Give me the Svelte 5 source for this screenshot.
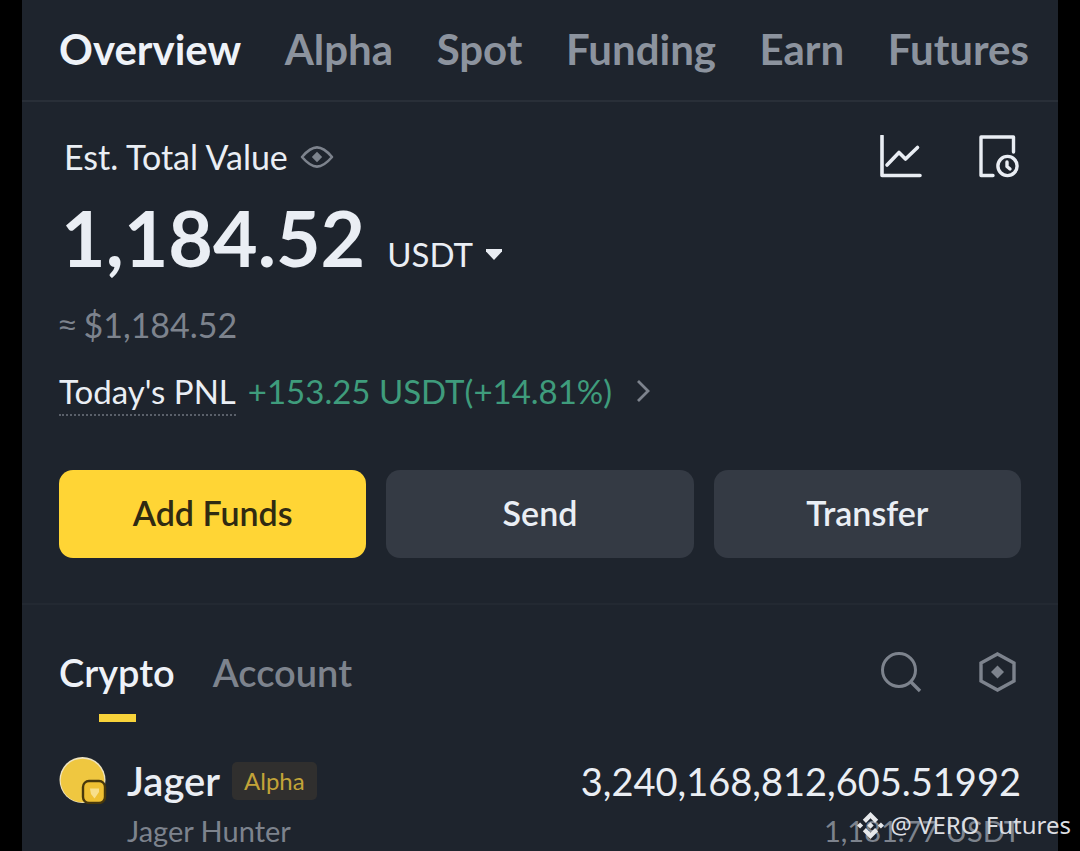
<script>
  const sections = ['Overview', 'Alpha', 'Spot', 'Funding', 'Earn', 'Futures'];
</script>

<div class="screen">
  <main class="wallet">
    <nav class="sections" aria-label="Wallet sections">
      {#each sections as name, i}
        <a href="#{name.toLowerCase()}" class:active={i === 0}>{name}</a>
      {/each}
    </nav>

    <section class="summary">
      <header class="summary-head">
        <h1>Est. Total Value</h1>
        <button class="icon" aria-label="Hide balance">
          <svg width="34" height="24" viewBox="0 0 34 24" fill="none" stroke="#7d838d" stroke-width="2.6" stroke-linejoin="round">
            <path d="M2 12C8 5 12 2.400 17 2.400S26 5 32 12C26 19 22 21.600 17 21.600S8 19 2 12Z" />
            <path d="M17 6.800L22.200 12L17 17.200L11.800 12Z" fill="#7d838d" stroke="none" />
          </svg>
        </button>
        <div class="tools">
          <button class="icon" aria-label="Asset analysis">
            <svg width="44" height="44" viewBox="0 0 44 44" fill="none" stroke="#e9edf3" stroke-width="3.6" stroke-linejoin="round" stroke-linecap="round">
              <path d="M3 1V40.500H41" />
              <path d="M8 30L20 17.500L26.500 24L38.500 12.500" />
            </svg>
          </button>
          <button class="icon" aria-label="Transaction history">
            <svg width="44" height="44" viewBox="0 0 44 44" fill="none" stroke="#e9edf3" stroke-width="3.4" stroke-linejoin="round" stroke-linecap="round">
              <path d="M16 40.500H4V2H36.500V17" />
              <circle cx="30.500" cy="31" r="9.600" />
              <path d="M30 27V31.500L33 34" stroke-width="3.400" />
            </svg>
          </button>
        </div>
      </header>

      <div class="total">
        <strong>1,184.52</strong>
        <button class="unit">
          USDT
          <svg width="18" height="14" viewBox="0 0 18 14" fill="#e9edf3"><path d="M1 2H17V4.500L9 13L1 4.500Z" /></svg>
        </button>
      </div>
      <p class="fiat"><span>≈</span>$1,184.52</p>
      <div class="pnl">
        <span class="pnl-label">Today's PNL</span>
        <a href="#pnl" class="pnl-value">
          +153.25 USDT(+14.81%)
          <svg width="14" height="24" viewBox="0 0 14 24" fill="none" stroke="#7d838d" stroke-width="2.800"><path d="M2 2L12 12L2 22" /></svg>
        </a>
      </div>

      <div class="actions">
        <button class="primary">Add Funds</button>
        <button>Send</button>
        <button>Transfer</button>
      </div>
    </section>

    <section class="assets">
      <header class="asset-head">
        <button class="tab active">Crypto</button>
        <button class="tab">Account</button>
        <div class="tools">
          <button class="icon" aria-label="Search">
            <svg width="44" height="44" viewBox="0 0 44 44" fill="none" stroke="#7d838d" stroke-width="3"><circle cx="20" cy="20" r="16.500" /><path d="M31 31L41 41" stroke-width="3.400" /></svg>
          </button>
          <button class="icon" aria-label="Settings">
            <svg width="44" height="44" viewBox="0 0 44 44" fill="none" stroke="#7d838d" stroke-width="3.400"><path d="M20.500 4L37 13V31L20.500 40L4 31V13Z" /><path d="M20.500 15.500L27 22L20.500 28.500L14 22Z" fill="#7d838d" stroke="none" /></svg>
          </button>
        </div>
      </header>

      <article class="asset">
        <svg class="coin" width="48" height="48" viewBox="0 0 48 48">
          <circle cx="23.500" cy="24" r="23" fill="#eee3c0" />
          <circle cx="23.500" cy="24.500" r="21.800" fill="#efc740" />
          <rect x="24" y="25" width="22" height="22" rx="6" fill="#efc033" stroke="#48380c" stroke-width="2.400" />
          <path d="M31 32.500H40V36L35.500 42.500L32 38Z" fill="#f8df8c" />
        </svg>
        <div class="name">
          <h2>Jager <span class="badge">Alpha</span></h2>
          <p>Jager Hunter</p>
        </div>
        <div class="amount">
          <strong>3,240,168,812,605.51992</strong>
          <p>1,181.77 USDT</p>
        </div>
      </article>
    </section>
  </main>

  <div class="credit">
    <svg width="27" height="27" viewBox="0 0 28 28" fill="#e6e8eb">
      <path d="M14 0L22 8L18.700 11.300L14 6.600L9.300 11.300L6 8Z" />
      <path d="M14 28L22 20L18.700 16.700L14 21.400L9.300 16.700L6 20Z" />
      <path d="M3.200 10.800L6.400 14L3.200 17.200L0 14ZM24.800 10.800L28 14L24.800 17.200L21.600 14ZM14 10.700L17.300 14L14 17.300L10.700 14Z" />
    </svg>
    <span>@ VERO Futures</span>
  </div>
</div>

<style>
  :global(body) { margin: 0; background: #000; }
  .screen {
    position: relative;
    box-sizing: border-box;
    height: 100vh;
    overflow: hidden;
    padding: 0 22px;
    font-family: Lato, "Liberation Sans", sans-serif;
    color: #eaeef4;
    background: #000;
  }
  .wallet { min-height: 100%; background: #1e242d; }
  h1, h2, p { margin: 0; font-weight: 400; }
  button { font: inherit; color: inherit; background: none; border: 0; padding: 0; cursor: pointer; }
  a { color: inherit; text-decoration: none; }
  svg { display: block; flex: none; }
  .sections {
    display: flex;
    justify-content: space-between;
    padding: 24px 29px 25px 37px;
    border-bottom: 2px solid #292f38;
    font-size: 42px;
    line-height: 51px;
    font-weight: 700;
    color: #8c939e;
  }
  .sections .active { color: #eef2f8; }
  .summary { padding: 32px 37px 45px; border-bottom: 2px solid #232932; }
  .summary-head { display: flex; align-items: center; height: 46px; padding-left: 5px; }
  h1 { font-size: 34px; line-height: 46px; margin-right: 12px; }
  .tools { display: flex; gap: 54px; margin-left: auto; }
  .total { display: flex; align-items: baseline; gap: 22px; padding-left: 2px; }
  .total strong { font-size: 77px; line-height: 114px; font-weight: 700; }
  .unit { display: flex; align-items: center; gap: 12px; font-size: 33px; }
  .fiat { display: flex; gap: 8px; margin-top: 8px; font-size: 34px; line-height: 46px; color: #7d838d; }
  .fiat span { font-family: "Liberation Sans", sans-serif; font-size: 30px; }
  .pnl { display: flex; align-items: flex-start; gap: 12px; margin-top: 20px; font-size: 33px; line-height: 46px; }
  .pnl-label { border-bottom: 2px dotted #5a606a; }
  .pnl-value { display: flex; align-items: center; gap: 24px; color: #3f9c7c; }
  .actions { display: grid; grid-template-columns: repeat(3, 1fr); gap: 20px; margin-top: 54px; }
  .actions button { height: 88px; padding-bottom: 4px; border-radius: 14px; background: #343a44; font-size: 34px; font-weight: 600; }
  .actions .primary { background: #ffd535; color: #302a12; }
  .assets { padding: 45px 37px 0; }
  .asset-head { display: flex; align-items: flex-start; gap: 38px; }
  .tab { position: relative; height: 72px; padding-bottom: 28px; font-size: 38px; line-height: 44px; font-weight: 600; color: #7d838d; }
  .tab.active { color: #eef2f8; }
  .tab.active::after { content: ""; position: absolute; left: 50%; bottom: 0; width: 37px; height: 8px; margin-left: -18px; background: #f8d33a; }
  .asset { display: flex; align-items: flex-start; margin-top: 32px; }
  .coin { margin-top: 2px; }
  .name { margin-left: 20px; }
  h2 { display: flex; align-items: center; gap: 12px; font-size: 40px; line-height: 54px; font-weight: 600; }
  .badge { padding: 0 12px; border-radius: 5px; background: #302f2e; color: #c2a338; font-size: 24px; line-height: 38px; font-weight: 400; }
  .name p, .amount p { font-size: 29px; line-height: 46px; color: #7d838d; }
  .amount { margin-left: auto; text-align: right; }
  .amount strong { display: block; font-size: 38px; line-height: 54px; font-weight: 400; }
  .credit { position: absolute; right: 9px; bottom: 8px; display: flex; align-items: center; gap: 6px; font: 24px/36px "Noto Sans", sans-serif; color: #dcdee2; }
</style>
